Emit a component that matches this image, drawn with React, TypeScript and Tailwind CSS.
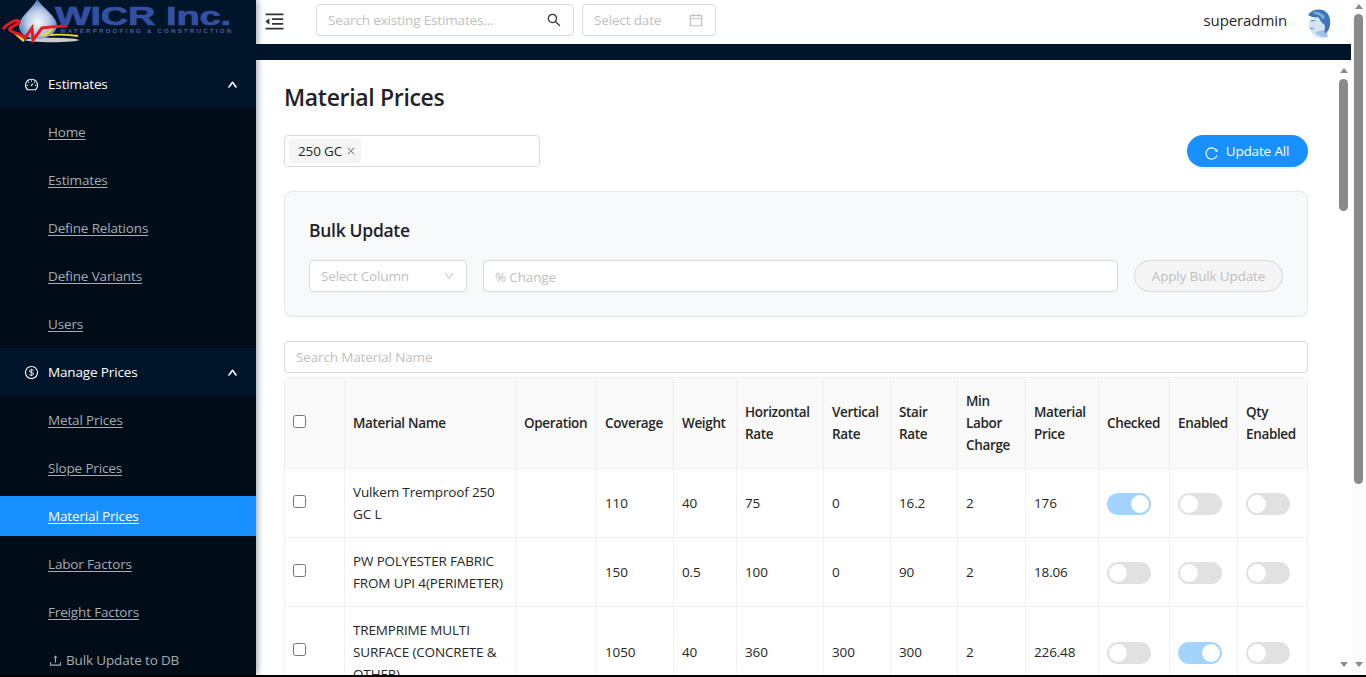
import { AiOutlineMenuFold, AiOutlineDashboard, AiOutlineDollar, AiOutlineSearch, AiOutlineCalendar, AiOutlineClose, AiOutlineDown, AiOutlineUp, AiOutlineUpload, AiOutlineReload } from "react-icons/ai";

const font = { fontFamily: '"Open Sans", "Noto Sans", sans-serif' };

function Logo() {
  return (
    <div className="h-[60px] w-full shrink-0 overflow-hidden">
      <svg width="240" height="60" viewBox="0 0 240 60">
        <defs>
          <radialGradient id="drop" cx="50%" cy="58%" r="58%">
            <stop offset="0" stopColor="#f6f8fc" />
            <stop offset="0.5" stopColor="#bccbe6" />
            <stop offset="1" stopColor="#3a72b8" />
          </radialGradient>
        </defs>
        <ellipse cx="52" cy="40" rx="27" ry="2.2" fill="#c9cccc" />
        <path d="M37 -1 C34 8 18 17 19 27 C20 36 30 39 38 39 C48 39 57 33 57 25 C57 17 42 7 37 -1Z" fill="url(#drop)" />
        <path d="M15 33 L24 41" fill="none" stroke="#f3d531" strokeWidth="2.6" />
        <path d="M42 36 C48 34 52 30 54 25" fill="none" stroke="#f3d531" strokeWidth="2.2" />
        <path d="M50 35 C60 34 70 35 78 36" fill="none" stroke="#f3d531" strokeWidth="1.8" />
        <path d="M3 29 C8 23 16 19 19 21 C21 24 8 27 10 30 C12 33 20 33 25 38 L32 28 L33 40 L42 28 C50 27 58 26 67 26" fill="none" stroke="#e8191d" strokeWidth="3" />
        <text x="55" y="25" fontFamily="Liberation Sans" fontWeight="700" fontSize="26" fill="#3350a3" stroke="#3350a3" strokeWidth="0.7" textLength="100" lengthAdjust="spacingAndGlyphs">WICR</text>
        <text x="166" y="25" fontFamily="Liberation Sans" fontWeight="700" fontSize="26" fill="#3350a3" stroke="#3350a3" strokeWidth="0.7" textLength="65" lengthAdjust="spacingAndGlyphs">Inc.</text>
        <text x="60" y="33" fontFamily="Liberation Sans" fontWeight="700" fontSize="6.2" fill="#4a5f96" textLength="171" lengthAdjust="spacing">WATERPROOFING &amp; CONSTRUCTION</text>
      </svg>
    </div>
  );
}

function SubItem({ label }: { label: string }) {
  return (
    <div className="h-12 shrink-0 pl-12 flex items-center text-[13.5px] text-[#a6adb4] underline underline-offset-2">{label}</div>
  );
}

function Group({ label, icon }: { label: string; icon: React.ReactNode }) {
  return (
    <div className="h-12 shrink-0 bg-[#001529] pl-6 pr-4 flex items-center text-[13.5px] text-white">
      <span className="w-6">{icon}</span>
      <span className="flex-1">{label}</span>
      <AiOutlineUp size={11} strokeWidth={80} stroke="currentColor" className="mr-0.5" />
    </div>
  );
}

function Sidebar() {
  return (
    <aside className="w-64 shrink-0 bg-[#001529] flex flex-col overflow-hidden z-10 shadow-[2px_0_6px_rgba(0,21,41,0.35)]">
      <Logo />
      <Group label="Estimates" icon={<AiOutlineDashboard size={15} />} />
      <div className="bg-[#000c17] shrink-0">
        {["Home", "Estimates", "Define Relations", "Define Variants", "Users"].map((x) => (
          <SubItem key={x} label={x} />
        ))}
      </div>
      <Group label="Manage Prices" icon={<AiOutlineDollar size={15} />} />
      <div className="bg-[#000c17] flex-1">
        <SubItem label="Metal Prices" />
        <SubItem label="Slope Prices" />
        <div className="h-10 my-1 bg-[#1890ff] pl-12 flex items-center text-[13.5px] text-white underline underline-offset-2">Material Prices</div>
        <SubItem label="Labor Factors" />
        <SubItem label="Freight Factors" />
        <div className="h-12 pl-12 flex items-center text-[13.5px] text-[#a6adb4] gap-[3px]">
          <AiOutlineUpload size={15} />
          Bulk Update to DB
        </div>
      </div>
    </aside>
  );
}

function Avatar() {
  return (
    <svg width="24" height="30" viewBox="0 0 24 30" className="mt-[5px]">
      <path d="M2 11 C1 17 3 24 8 27 C11 29 17 30 21 29 L21 16 L14 7Z" fill="#d5e3f2" />
      <path d="M8 24 C12 27 17 28 20 28 L20 20 C16 22 12 21 8 24Z" fill="#9fc0e2" />
      <path d="M1 6 C5 0 14 -1 19 3 C24 7 24 15 22 20 C21 22 19 24 18 24 C17 21 19 18 17 15 C14 14 13 10 11 8 C8 9 4 8 1 6Z" fill="#3a76b8" />
      <path d="M6 3 C10 2 16 4 18 8 L16 11 C14 7 11 5 7 5Z" fill="#7ba8d6" />
      <path d="M4 12 l4 -0.5 M3 19 c2 1 3 1 4 0" stroke="#4f7fb0" strokeWidth="1" fill="none" />
    </svg>
  );
}

function Header() {
  return (
    <header className="h-11 shrink-0 bg-white flex items-start pt-1 pl-[7px] pr-5">
      <div className="w-[53px] h-8 flex items-center pt-0.5">
        <AiOutlineMenuFold size={23} className="text-[#333]" />
      </div>
      <div className="w-[258px] h-8 border border-[#d9d9d9] rounded-sm flex items-center px-[11px] text-[13.5px] text-[#bfbfbf]">
        <span className="flex-1">Search existing Estimates...</span>
        <AiOutlineSearch size={16} className="text-[#333]" />
      </div>
      <div className="w-[134px] h-8 ml-2 border border-[#d9d9d9] rounded-sm flex items-center px-[11px] text-[13.5px] text-[#bfbfbf]">
        <span className="flex-1">Select date</span>
        <AiOutlineCalendar size={16} />
      </div>
      <div className="flex-1" />
      <span className="h-8 flex items-center text-[15px] tracking-[-0.1px] text-[#262626] mr-5">superadmin</span>
      <Avatar />
    </header>
  );
}

function Toggle({ on }: { on?: boolean }) {
  return (
    <div className={`w-11 h-[22px] mt-0.5 rounded-full p-0.5 flex ${on ? "bg-[#a3d3ff] justify-end" : "bg-[#e1e1e1] justify-start"}`}>
      <div className="w-[18px] h-[18px] rounded-full bg-white" />
    </div>
  );
}

function Check() {
  return <div className="w-[13px] h-[13px] mb-1 border border-[#767676] rounded-[2.5px] bg-white" />;
}

const heads: [string, number][] = [
  ["", 60], ["Material Name", 171], ["Operation", 81], ["Coverage", 77], ["Weight", 63], ["Horizontal Rate", 87],
  ["Vertical Rate", 67], ["Stair Rate", 67], ["Min Labor Charge", 68], ["Material Price", 73], ["Checked", 71], ["Enabled", 68], ["Qty Enabled", 70],
];

const rows = [
  { name: "Vulkem Tremproof 250 GC L", v: ["110", "40", "75", "0", "16.2", "2", "176"], t: [true, false, false], h: "h-[69px]" },
  { name: "PW POLYESTER FABRIC FROM UPI 4(PERIMETER)", v: ["150", "0.5", "100", "0", "90", "2", "18.06"], t: [false, false, false], h: "h-[69px]" },
  { name: "TREMPRIME MULTI SURFACE (CONCRETE & OTHER)", v: ["1050", "40", "360", "300", "300", "2", "226.48"], t: [false, true, false], h: "h-[90px]" },
];

const cell = "border-r border-b border-[#f0f0f0] px-2 align-middle";

function Table() {
  return (
    <table className="table-fixed border-separate border-spacing-0 w-[1024px] text-[13.5px] text-[#262626] leading-[22px] mt-1 border-t border-l border-[#f0f0f0] rounded-t-sm">
      <colgroup>
        {heads.map(([h, w], i) => (
          <col key={i} style={{ width: w }} />
        ))}
      </colgroup>
      <thead>
        <tr className="h-[91px] bg-[#fafafa]">
          {heads.map(([h], i) => (
            <th key={i} className={`${cell} font-semibold text-left tracking-[-0.35px]`}>
              {i === 0 ? <Check /> : h}
            </th>
          ))}
        </tr>
      </thead>
      <tbody>
        {rows.map((r) => (
          <tr key={r.name} className={r.h}>
            <td className={cell}><Check /></td>
            <td className={cell}>{r.name}</td>
            <td className={cell}></td>
            {r.v.map((x, i) => (
              <td key={i} className={cell}>{x}</td>
            ))}
            {r.t.map((x, i) => (
              <td key={i} className={cell}><Toggle on={x} /></td>
            ))}
          </tr>
        ))}
      </tbody>
    </table>
  );
}

function Bar({ top, thumbH, className }: { top: string; thumbH: string; className: string }) {
  return (
    <div className={`w-[15px] shrink-0 flex flex-col items-center ${className}`}>
      <div className={`w-0 h-0 border-x-[4px] border-x-transparent border-b-[5px] border-b-[#8a8a8a] ${top}`} />
      <div className={`w-[9px] rounded-full bg-[#8a8a8a] mt-[5px] ${thumbH}`} />
      <div className="flex-1" />
      <div className="w-0 h-0 border-x-[4px] border-x-transparent border-t-[5px] border-t-[#8a8a8a] mb-2" />
    </div>
  );
}

function Content() {
  return (
    <div className="flex-1 min-w-0 overflow-hidden pl-7 pr-7">
      <h1 className="text-[23px] tracking-[-0.33px] font-semibold text-[#1f2329] leading-8 mt-[21px]">Material Prices</h1>
      <div className="flex justify-between mt-[22px]">
        <div className="w-64 h-8 border border-[#d9d9d9] rounded-sm flex items-center pl-1 text-[13.5px] text-[#262626]">
          <span className="h-6 bg-[#f5f5f5] border border-[#f0f0f0] rounded-sm pl-2 pr-1 flex items-center gap-1">
            250 GC <AiOutlineClose size={10} className="text-[#777]" />
          </span>
        </div>
        <div className="h-8 w-[121px] rounded-full bg-[#1890ff] text-white text-[13.5px] flex items-center justify-center gap-[7px] pr-[2px] shadow-[0_2px_0_rgba(0,0,0,0.04)]">
          <AiOutlineReload size={15} className="mt-1" /> Update All
        </div>
      </div>
      <section className="mt-6 h-[126px] rounded-lg border border-[#e4e6eb] bg-[#f8f9fb] px-6 pt-6">
        <h2 className="text-[17.5px] tracking-[-0.3px] font-semibold text-[#1f2329] leading-7">Bulk Update</h2>
        <div className="flex mt-4 gap-4 text-[13.5px] text-[#bfbfbf]">
          <div className="w-[158px] h-8 border border-[#d9d9d9] bg-white rounded-sm flex items-center px-[11px]">
            <span className="flex-1">Select Column</span>
            <AiOutlineDown size={12} />
          </div>
          <div className="flex-1 h-8 pt-0.5 border border-[#d9d9d9] bg-white rounded-sm flex items-center px-[11px]">% Change</div>
          <div className="w-[149px] h-8 border border-[#d9d9d9] bg-[#f5f5f5] rounded-full flex items-center justify-center">Apply Bulk Update</div>
        </div>
      </section>
      <div className="mt-6 h-8 border border-[#d9d9d9] rounded-sm flex items-center px-[11px] text-[13.5px] text-[#bfbfbf]">Search Material Name</div>
      <Table />
    </div>
  );
}

export default function App() {
  return (
    <div className="h-[677px] w-[1366px] overflow-hidden bg-black flex flex-col tracking-[-0.15px]" style={font}>
      <div className="h-[675px] flex overflow-hidden bg-white">
        <Sidebar />
        <div className="flex-1 min-w-0 flex flex-col">
          <Header />
          <div className="h-4 shrink-0 bg-[#001529]" />
          <div className="flex-1 flex min-h-0">
            <Content />
            <Bar top="mt-2" thumbH="h-[132px] relative top-[1px]" className="bg-white" />
          </div>
        </div>
        <Bar top="mt-1" thumbH="h-[470px]" className="bg-[#fbfbfb]" />
      </div>
    </div>
  );
}
